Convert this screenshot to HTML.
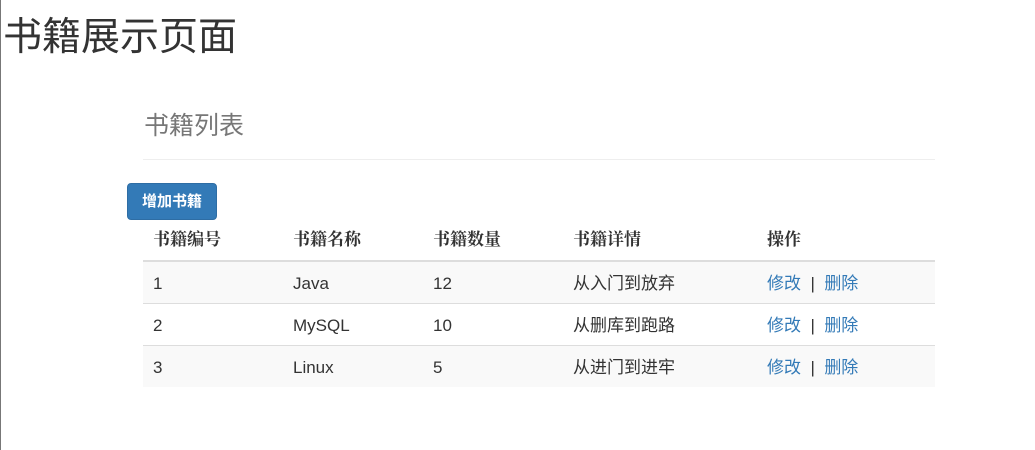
<!DOCTYPE html>
<html><head><meta charset="utf-8"><style>
body{margin:0;width:1035px;height:450px;overflow:hidden;background:#fff;font-family:"Liberation Sans","Noto Sans CJK SC",sans-serif;color:#333;font-size:16px;position:relative}
.lb{position:absolute;left:0;top:0;width:1px;height:450px;background:#777}
h1{position:absolute;left:3px;top:14px;margin:0;font-size:39px;font-weight:400;line-height:48px;color:#333}
h3{position:absolute;left:144px;top:109px;margin:0;font-size:25px;font-weight:400;line-height:34px;color:#777}
.hr{position:absolute;left:143px;top:159px;width:792px;height:1px;background:#eee}
.btn{position:absolute;left:127px;top:183px;width:88px;height:35px;background:#337ab7;border:1px solid #2e6da4;border-radius:4px;color:#fff;font-size:15px;font-weight:700;line-height:35px;text-align:center}
table{position:absolute;left:143px;top:220px;width:792px;border-collapse:collapse}
th,td{padding:0 10px;text-align:left;height:41px;font-size:17px;line-height:20px;vertical-align:middle}
th{font-weight:700;border-bottom:2px solid #ddd;height:40px;font-size:17px;font-family:"Liberation Serif","Noto Serif CJK SC",serif}
td{border-top:1px solid #ddd;padding-top:2px;height:39px}
tr.s td{background:#f9f9f9}
a{color:#337ab7;text-decoration:none}
</style></head><body>
<div class="lb"></div>
<h1>书籍展示页面</h1>
<h3>书籍列表</h3>
<div class="hr"></div>
<div class="btn">增加书籍</div>
<table>
<tr><th style="width:120px">书籍编号</th><th style="width:120px">书籍名称</th><th style="width:120px">书籍数量</th><th style="width:174px">书籍详情</th><th>操作</th></tr>
<tr class="s"><td>1</td><td>Java</td><td>12</td><td>从入门到放弃</td><td><a>修改</a> &nbsp;|&nbsp; <a>删除</a></td></tr>
<tr><td>2</td><td>MySQL</td><td>10</td><td>从删库到跑路</td><td><a>修改</a> &nbsp;|&nbsp; <a>删除</a></td></tr>
<tr class="s"><td>3</td><td>Linux</td><td>5</td><td>从进门到进牢</td><td><a>修改</a> &nbsp;|&nbsp; <a>删除</a></td></tr>
</table>
</body></html>
